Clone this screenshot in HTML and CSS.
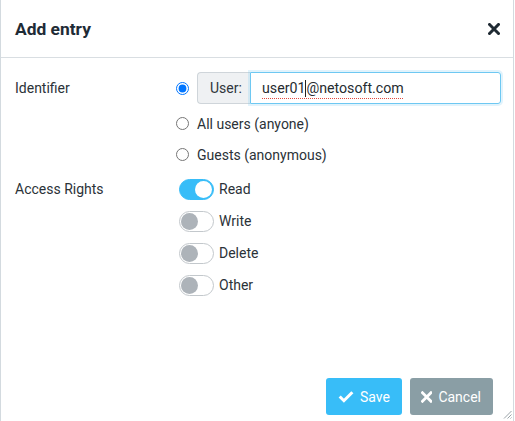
FILE: index.html
```html
<!DOCTYPE html>
<html>
<head>
<meta charset="utf-8">
<link rel="stylesheet" href="styles.css">
</head>
<body>
<div class="dialog">
  <div class="header">
    <div class="title">Add entry</div>
    <svg class="close" width="12" height="12" viewBox="0 0 12 12"><path d="M1.5 1.5 L10.5 10.5 M10.5 1.5 L1.5 10.5" stroke="#1f2a33" stroke-width="3" stroke-linecap="square"/></svg>
  </div>
  <div class="body">
    <div class="label">Identifier</div>
    <div class="controls">
      <div class="opt first">
        <input type="radio" name="id" checked>
        <div class="group">
          <span class="addon">User:</span>
          <div class="field"><span class="sp">user01</span><span class="caret"></span><span class="sp">@netosoft.com</span></div>
        </div>
      </div>
      <label class="opt"><input type="radio" name="id"><span>All users (anyone)</span></label>
      <label class="opt"><input type="radio" name="id"><span>Guests (anonymous)</span></label>
    </div>
    <div class="label access">Access Rights</div>
    <div class="controls">
      <div class="sw-row"><span class="switch on"></span><span>Read</span></div>
      <div class="sw-row"><span class="switch"></span><span>Write</span></div>
      <div class="sw-row"><span class="switch"></span><span>Delete</span></div>
      <div class="sw-row"><span class="switch"></span><span>Other</span></div>
    </div>
  </div>
  <div class="footer">
    <button class="btn save"><svg width="19" height="15" viewBox="0 0 19 15"><path d="M2 7.5 L7 12.5 L17 2.5" fill="none" stroke="#fff" stroke-width="3.6" stroke-linejoin="miter"/></svg>Save</button>
    <button class="btn cancel"><svg width="12" height="12" viewBox="0 0 12 12"><path d="M1.5 1.5 L10.5 10.5 M10.5 1.5 L1.5 10.5" stroke="#fff" stroke-width="3" stroke-linecap="square"/></svg>Cancel</button>
  </div>
  <svg class="grip" width="9" height="9" viewBox="0 0 9 9"><path d="M8.5 1 L1 8.5 M8.5 4.5 L4.5 8.5 M8.5 7.5 L7.5 8.5" stroke="#9aa3a8" stroke-width="1"/></svg>
</div>
</body>
</html>
```
FILE: styles.css
```css
html, body {
  margin: 0;
  padding: 0;
  background: #fff;
}
body {
  font-family: Roboto, "Liberation Sans", sans-serif;
  font-size: 14px;
  color: #2b3238;
}
.dialog {
  position: relative;
  width: 514px;
  height: 421px;
  box-sizing: border-box;
  border-left: 1px solid #d3dadf;
  border-right: 1px solid #d3dadf;
  display: flex;
  flex-direction: column;
}
.header {
  height: 57px;
  border-bottom: 1px solid #d9dee2;
  display: flex;
  align-items: center;
  justify-content: space-between;
  padding: 0 13px 0 14px;
}
.title {
  font-size: 17.4px;
  font-weight: 700;
  color: #1e2b36;
}
.close {
  display: block;
}
.body {
  display: grid;
  grid-template-columns: 161px 1fr;
  row-gap: 3px;
  padding: 14px 12px 0 14px;
  flex: 1;
  align-content: start;
}
.label {
  line-height: 32px;
}
.access {
  line-height: 33px;
}
.controls {
  display: flex;
  flex-direction: column;
}
.opt {
  display: flex;
  align-items: center;
  height: 31px;
}
.opt.first {
  height: 32px;
  margin-bottom: 4px;
}
.opt input {
  width: 13px;
  height: 13px;
  margin: 0 8px 0 0;
}
.group {
  flex: 1;
  display: flex;
  height: 32px;
}
.addon {
  width: 53px;
  box-sizing: border-box;
  background: #eff1f3;
  border: 1px solid #cfd5da;
  border-right: none;
  border-radius: 4px 0 0 4px;
  display: flex;
  align-items: center;
  padding-left: 12px;
  color: #2f363c;
}
.field {
  flex: 1;
  box-sizing: border-box;
  border: 1px solid #6ec8f2;
  border-radius: 0 3px 3px 0;
  box-shadow: 0 0 0 2px rgba(120, 200, 240, 0.22);
  display: flex;
  align-items: center;
  padding-left: 11px;
  font-size: 14.2px;
  color: #252b30;
}
.sp {
  text-decoration: underline dotted #e0483e;
  text-underline-offset: 5px;
  text-decoration-thickness: 1px;
}
.caret {
  display: inline-block;
  width: 1px;
  height: 17px;
  background: #222;
}
.sw-row {
  display: flex;
  align-items: center;
  height: 32px;
}
.switch {
  position: relative;
  width: 35px;
  height: 21px;
  box-sizing: border-box;
  border: 1px solid #c3c8cc;
  border-radius: 11px;
  margin: 0 5px 0 3px;
  background: #fff;
}
.switch::after {
  content: "";
  position: absolute;
  top: 1px;
  left: 1px;
  width: 17px;
  height: 17px;
  border-radius: 50%;
  background: #adb3b9;
}
.switch.on {
  background: #38bdf8;
  border-color: #38bdf8;
}
.switch.on::after {
  left: auto;
  right: 1px;
  background: #fff;
}
.footer {
  display: flex;
  justify-content: flex-end;
  gap: 8px;
  padding: 0 20px 6px 0;
}
.btn {
  height: 37px;
  border: none;
  border-radius: 3px;
  color: #fff;
  font-family: Roboto, "Liberation Sans", sans-serif;
  font-size: 14px;
  display: flex;
  align-items: center;
  padding: 0 12px;
  gap: 6px;
}
.save {
  width: 76px;
  background: #38bdf8;
}
.cancel {
  width: 83px;
  background: #8a9ea5;
  padding-left: 11px;
}
.grip {
  position: absolute;
  right: 1px;
  bottom: 2px;
}
```
